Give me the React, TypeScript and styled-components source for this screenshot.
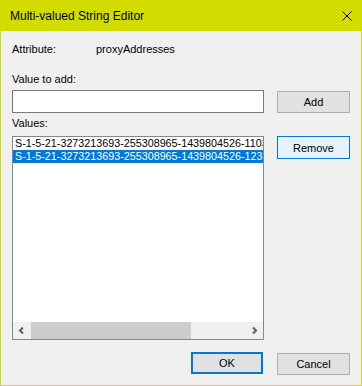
import React from 'react';
import styled, {createGlobalStyle} from 'styled-components';

const GlobalStyle = createGlobalStyle`
html, body {
margin: 0;
padding: 0;
background: #f0f0f0;
}
* {
box-sizing: border-box;
}
`

const Window = styled.div`
width: 362px;
height: 386px;
border: 1px solid #d2dc00;
background: #f0f0f0;
display: flex;
flex-direction: column;
font-family: "Liberation Sans", Arial, sans-serif;
font-size: 11px;
color: #000;
`
const TitleBar = styled.div`
height: 30px;
background: #d2dc00;
display: flex;
align-items: center;
justify-content: space-between;
padding: 0 9px 0 9px;
font-size: 12px;
color: #000;
`
const CloseIcon = styled.svg`
width: 10px;
height: 10px;
`
const Body = styled.div`
flex: 1;
padding: 12px 11px 0 11px;
display: flex;
flex-direction: column;
`
const Line = styled.div<{ $gap?: number }>`
line-height: 13px;
height: 13px;
margin-top: ${p => p.$gap || 0}px;
display: flex;
`
const FieldName = styled.span`
width: 84px;
`
const Row = styled.div<{ $gap: number }>`
display: flex;
align-items: flex-start;
gap: 13px;
margin-top: ${p => p.$gap}px;
`
const TextInput = styled.input`
width: 252px;
height: 23px;
border: 1px solid #7a7a7a;
background: #fff;
padding: 0 3px;
font: inherit;
outline: none;
`
const Button = styled.button<{ $variant?: 'hover' | 'default' }>`
width: ${p => p.$variant === 'default' ? '72px' : '73px'};
height: ${p => p.$variant === 'hover' ? '23px' : '22px'};
margin-top: ${p => p.$variant === 'hover' || p.$variant === 'default' ? '0' : '1px'};
padding: 0;
font-family: "Liberation Sans", Arial, sans-serif;
font-size: 11px;
color: #000;
background: ${p => p.$variant === 'hover' ? '#e5f1fb' : '#e1e1e1'};
border: ${p => p.$variant === 'default' ? '2px solid #0078d7' : p.$variant === 'hover' ? '1px solid #0078d7' : '1px solid #adadad'};
`
const ListBox = styled.div`
width: 252px;
height: 204px;
border: 1px solid #828790;
background: #fff;
display: flex;
flex-direction: column;
overflow: hidden;
`
const Items = styled.div`
flex: 1;
overflow: hidden;
`
const Item = styled.div<{ $selected?: boolean }>`
height: 13px;
line-height: 13px;
padding-left: 2px;
font-size: 10.75px;
white-space: nowrap;
background: ${p => p.$selected ? '#0078d7' : 'transparent'};
color: ${p => p.$selected ? '#fff' : '#000'};
`
const ScrollBar = styled.div`
height: 17px;
display: flex;
background: #f0f0f0;
`
const ArrowButton = styled.div`
width: 17px;
height: 17px;
display: flex;
align-items: center;
justify-content: center;
`
const Track = styled.div`
flex: 1;
display: flex;
`
const Thumb = styled.div`
height: 17px;
background: #cdcdcd;
margin-left: 1px;
`
const Footer = styled.div`
display: flex;
justify-content: flex-end;
gap: 14px;
margin-top: 12px;
`

const values = [
    'S-1-5-21-3273213693-255308965-1439804526-1103',
    'S-1-5-21-3273213693-255308965-1439804526-1234',
]

const Chevron = ({dir}: { dir: 'left' | 'right' }) => (
    <svg width="7" height="7" viewBox="0 0 7 7">
        <path d={dir === 'left' ? 'M5 0.5 L2 3.5 L5 6.5' : 'M2 0.5 L5 3.5 L2 6.5'} fill="none" stroke="#606060" strokeWidth="2"/>
    </svg>
)

const App = () => {
    const thumbWidth = 160
    return (
        <>
            <GlobalStyle/>
            <Window>
                <TitleBar>
                    <span>Multi-valued String Editor</span>
                    <CloseIcon viewBox="0 0 10 10">
                        <path d="M0.5 0.5 L9.5 9.5 M9.5 0.5 L0.5 9.5" stroke="#000" strokeWidth="1"/>
                    </CloseIcon>
                </TitleBar>
                <Body>
                    <Line>
                        <FieldName>Attribute:</FieldName>
                        <span>proxyAddresses</span>
                    </Line>
                    <Line $gap={17}>Value to add:</Line>
                    <Row $gap={4}>
                        <TextInput/>
                        <Button>Add</Button>
                    </Row>
                    <Line $gap={4}>Values:</Line>
                    <Row $gap={6}>
                        <ListBox>
                            <Items>
                                {values.map((v, i) => (
                                    <Item key={v} $selected={i === 1}>{v}</Item>
                                ))}
                            </Items>
                            <ScrollBar>
                                <ArrowButton><Chevron dir="left"/></ArrowButton>
                                <Track>
                                    <Thumb style={{width: thumbWidth}}/>
                                </Track>
                                <ArrowButton><Chevron dir="right"/></ArrowButton>
                            </ScrollBar>
                        </ListBox>
                        <Button $variant="hover">Remove</Button>
                    </Row>
                    <Footer>
                        <Button $variant="default">OK</Button>
                        <Button>Cancel</Button>
                    </Footer>
                </Body>
            </Window>
        </>
    );
};

export default App;
